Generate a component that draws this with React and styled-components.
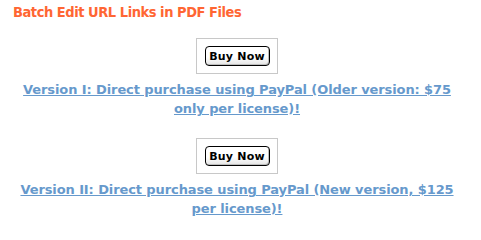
import React from "react";
import styled, { createGlobalStyle } from "styled-components";

const Global = createGlobalStyle`
  html, body { margin: 0; padding: 0; background: #fff; }
`;

const Page = styled.div`
  width: 448px;
  padding: 0 0 0 13px;
  font-family: "DejaVu Sans", Verdana, sans-serif;
`;

const Title = styled.div`
  font-family: "DejaVu Sans Condensed", "DejaVu Sans", sans-serif;
  font-weight: bold;
  font-size: 14.5px;
  line-height: 24px;
  color: #ff6633;
  letter-spacing: -0.45px;
`;

const Offer = styled.div`
  display: flex;
  flex-direction: column;
  align-items: center;
  margin-top: ${(p) => p.$top}px;
`;

const ButtonFrame = styled.div`
  box-sizing: border-box;
  width: 82px;
  height: 36px;
  border: 1px solid #c8c8c8;
  display: flex;
  align-items: center;
  justify-content: center;
`;

const BuyButton = styled.button`
  box-sizing: border-box;
  width: 65px;
  height: 20px;
  padding: 0;
  border: 1px solid #000;
  border-radius: 4px;
  background: linear-gradient(#ffffff 0%, #ffffff 55%, #e4e4e4 100%);
  box-shadow: inset -1px -1px 0 #bdbdbd;
  font-family: "DejaVu Sans", Verdana, sans-serif;
  font-weight: bold;
  font-size: 11px;
  color: #000;
  letter-spacing: 0.2px;
  cursor: pointer;
`;

const Link = styled.a`
  display: block;
  margin-top: 6px;
  text-align: center;
  font-weight: bold;
  font-size: 13px;
  line-height: 19px;
  letter-spacing: -0.1px;
  color: #6699cc;
  text-decoration: underline;
`;

export default function App() {
  return (
    <>
      <Global />
      <Page>
        <Title>Batch Edit URL Links in PDF Files</Title>
        <Offer $top={14}>
          <ButtonFrame>
            <BuyButton>Buy Now</BuyButton>
          </ButtonFrame>
          <Link href="#">
            Version I: Direct purchase using PayPal (Older version: $75 only per license)!
          </Link>
        </Offer>
        <Offer $top={20}>
          <ButtonFrame>
            <BuyButton>Buy Now</BuyButton>
          </ButtonFrame>
          <Link href="#">
            Version II: Direct purchase using PayPal (New version, $125 per license)!
          </Link>
        </Offer>
      </Page>
    </>
  );
}
